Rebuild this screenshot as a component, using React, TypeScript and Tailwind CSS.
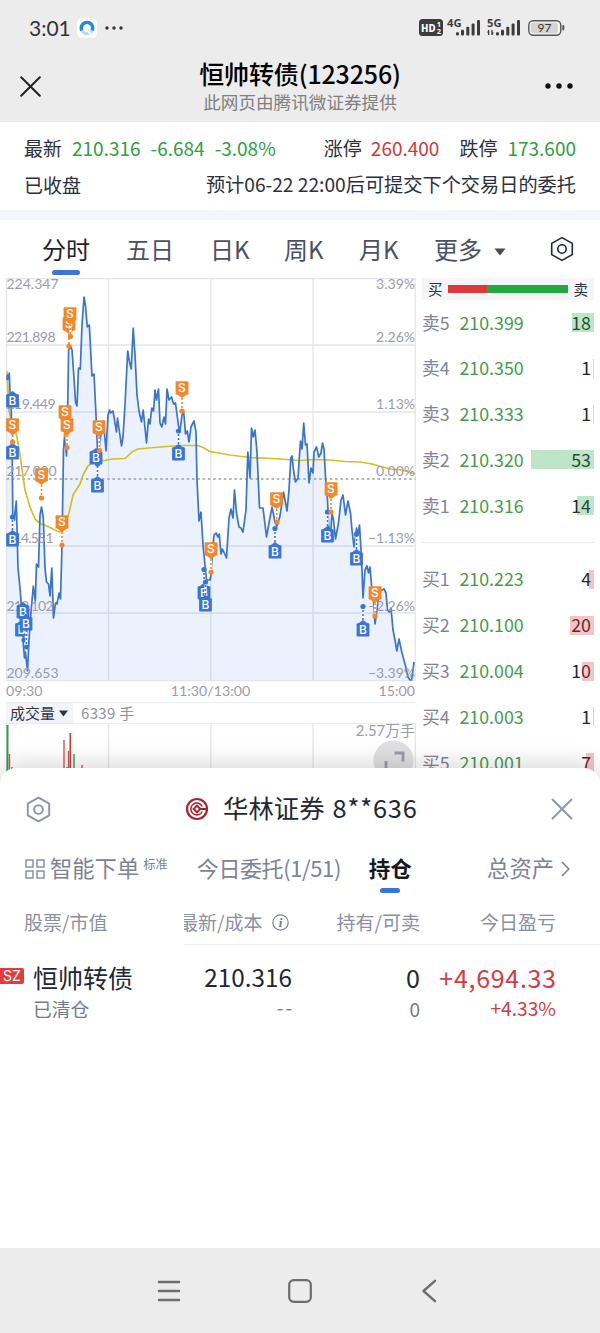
import React from "react";

const BLUE = "#3a74d8";
const ORANGE = "#f5872b";

const pricePoints =
  "7,380 7.5,375 8.5,379 9.3,373 10,392 11,400 12,440 12.8,515 14.5,520 15,512 16.3,501 18,568 20,588 21,600 23,640 24.5,658 25.5,652 27.5,671 29,640 31,612 33.3,586 35.3,601 36.5,564 38.5,567 40,515 41.5,507 43.3,518 45,568 46.5,582 48.5,584 50,596 51.8,568 53.5,618 55.5,603 57,604 59,593 60.5,599 62,545 63.5,450 64.5,437 66.5,456 67.5,420 68.6,350 70.5,346 72,350 74,378 75.5,402 77,406 78.5,368 80.3,369 82,325 84,297 85.5,306 87.3,327 89.3,325 92,376 94,374 96,415 97.5,450 99.5,451 101,432 104,428 106,451 108,415 109.5,410 110.5,413 113,411 116.5,432 117.5,418 121.5,446 123,437 125,405 127.7,351 129.5,362 131.2,369 133.2,328 135,355 137,395 139,411 141.5,422 143.2,410 146.5,443 148.5,419 150,424 151.8,408 153.5,411 155,390 156.5,400 158.5,389 160,423 161.8,427 164,417 165.5,424 167,389 169,400 171.5,397 173.5,404 175.5,403 178.5,426 180,431 182,415 183.7,412 185.5,434 187.3,431 189,442 191,427 194,421 196,432 197,480 199,521 201,512 203,545 206.5,580 210,580 211,575 213,545 214,535 216,533 218,537 219.3,534 221,554 222.5,549 226.5,558 229,518 231,509 233,518 234.5,490 236.5,513 239,527 241,528 243,532 246,510 247.8,452 250,478 251.5,428 253.3,437 255,430 257,452 259.5,508 263,508 266.5,537 269,523 272,507 275,522 277,526 280,516 283.5,492 285,500 287,511 289,490 290.8,458 292,456 293.5,470 295.5,482 298,478 299.5,455 300.5,441 302,449 303.7,423 305.5,445 307,444 309,483 311,468 313,473 314,452 316.5,447 318.8,457 321,453 322.5,443 324,449 325.5,477 327.5,500 329,530 330.5,535 332,513 333.5,520 335.5,539 338.5,523 341,500 343,495 345.5,515 348,501 350.5,513 352,530 354,547 355.5,536 356.5,528 358,535 359.5,525 361,550 362,570 363,598 365,570 367,566 368.5,573 370,567 371.5,585 373.5,600 375,624 377,610 379,592 382,590 384,589 386,593 387.5,610 389.2,612 391,608 393,630 395,640 396.8,651 399,639 402,653 405,664 408,677 410,680 411.5,680 413,670 414,662";

const averagePoints =
  "7,371 9,410 12,424 15,430 17,437 20,455 25,490 30,507 35,519 41,524 47,526 55,530 60,532 65,524 69,513 73,495 78,487 80,484 83,475 88,466 92,463 97,461 105,460.5 112,459 125,458.5 132,452 138,449 160,447 180,445.5 198,445.5 204,448 210,451.5 230,455 250,457.5 280,459 300,460.5 315,459.5 330,460 345,461.5 360,462 372,464 390,469 402,470 415,474";

type Marker = { kind: "B" | "S"; x: number; y: number; dotX?: number; dotY?: number };

// y is the centre of the label box, dotX / dotY the trade itself
const markers: Marker[] = [
  { kind: "B", x: 12.5, y: 401 },
  { kind: "B", x: 12.5, y: 453, dotX: 12.5, dotY: 429 },
  { kind: "S", x: 12.5, y: 425, dotX: 12.5, dotY: 442 },
  { kind: "B", x: 12.5, y: 540, dotX: 12.5, dotY: 517 },
  { kind: "B", x: 21.5, y: 630, dotX: 24, dotY: 640 },
  { kind: "B", x: 23, y: 612 },
  { kind: "B", x: 26, y: 624, dotX: 26.5, dotY: 647 },
  { kind: "S", x: 41.5, y: 475, dotX: 41.5, dotY: 498 },
  { kind: "S", x: 62, y: 522, dotX: 62, dotY: 545 },
  { kind: "S", x: 65, y: 412, dotX: 66, dotY: 435 },
  { kind: "S", x: 67, y: 425, dotX: 67, dotY: 447.5 },
  { kind: "S", x: 69, y: 324, dotX: 69, dotY: 346 },
  { kind: "S", x: 70, y: 314, dotX: 70.5, dotY: 336.5 },
  { kind: "B", x: 97.5, y: 486, dotX: 97.5, dotY: 464 },
  { kind: "B", x: 96, y: 458 },
  { kind: "S", x: 99, y: 427, dotX: 99.5, dotY: 450.5 },
  { kind: "B", x: 178.5, y: 454, dotX: 178.5, dotY: 431 },
  { kind: "S", x: 182, y: 388, dotX: 182, dotY: 411 },
  { kind: "B", x: 204, y: 593, dotX: 204, dotY: 569.5 },
  { kind: "B", x: 205.5, y: 605, dotX: 205.5, dotY: 582 },
  { kind: "S", x: 211, y: 549, dotX: 211, dotY: 572 },
  { kind: "B", x: 275, y: 552, dotX: 275, dotY: 528.5 },
  { kind: "S", x: 276.5, y: 499, dotX: 277, dotY: 522 },
  { kind: "B", x: 327.5, y: 536, dotX: 327.5, dotY: 512 },
  { kind: "S", x: 331, y: 489, dotX: 331, dotY: 512 },
  { kind: "B", x: 356.5, y: 559, dotX: 356.5, dotY: 534 },
  { kind: "B", x: 363, y: 630, dotX: 363, dotY: 606.5 },
  { kind: "S", x: 375, y: 593, dotX: 375, dotY: 616 },
];

const priceLabels = [
  { y: 288.5, left: "224.347", right: "3.39%", width: 52 },
  { y: 342, left: "221.898", right: "2.26%", width: 49 },
  { y: 409, left: "219.449", right: "1.13%", width: 49 },
  { y: 476, left: "217.000", right: "0.00%", width: 50 },
  { y: 543, left: "214.551", right: "−1.13%", width: 47 },
  { y: 610.5, left: "212.102", right: "−2.26%", width: 47 },
  { y: 677.5, left: "209.653", right: "−3.39%", width: 52 },
];

const volumeBars = [
  { x: 7.5, top: 1, w: 2, color: "#2f9e44" },
  { x: 9.5, top: 30, w: 1.4, color: "#d9534f" },
  { x: 12, top: 43, w: 1.4, color: "#2f9e44" },
  { x: 64, top: 16, w: 1.4, color: "#d9534f" },
  { x: 67, top: 43, w: 1.4, color: "#2f9e44" },
  { x: 68.5, top: 27, w: 1.4, color: "#d9534f" },
  { x: 70.3, top: 9, w: 1.6, color: "#c93a3a" },
  { x: 74, top: 30, w: 1.4, color: "#2f9e44" },
  { x: 82, top: 41, w: 1.4, color: "#d9534f" },
];

const sells = [
  { name: "卖5", price: "210.399", qty: 18, bar: 22 },
  { name: "卖4", price: "210.350", qty: 1, bar: 1 },
  { name: "卖3", price: "210.333", qty: 1, bar: 1 },
  { name: "卖2", price: "210.320", qty: 53, bar: 63 },
  { name: "卖1", price: "210.316", qty: 14, bar: 17 },
];

const buys = [
  { name: "买1", price: "210.223", qty: 4, bar: 5 },
  { name: "买2", price: "210.100", qty: 20, bar: 24 },
  { name: "买3", price: "210.004", qty: 10, bar: 12 },
  { name: "买4", price: "210.003", qty: 1, bar: 1 },
  { name: "买5", price: "210.001", qty: 7, bar: 8 },
];

const HexIcon: React.FC<{ color: string; size: number; stroke: number }> = ({ color, size, stroke }) => (
  <svg width={size} height={size} viewBox="0 0 26 26" fill="none" stroke={color} strokeWidth={stroke} strokeLinejoin="round">
    <path d="M13 1.6 L23.3 7.4 V18.6 L13 24.4 L2.7 18.6 V7.4 Z" />
    <circle cx="13" cy="13" r="4.2" />
  </svg>
);

const Signal: React.FC<{ label: string; data?: boolean }> = ({ label, data }) => (
  <svg width="36" height="20" viewBox="0 0 36 20" fill="#3c3c3c">
    <text x="0" y="9" fontSize="11" fontWeight="700" fontFamily="'Noto Sans', sans-serif" textLength="14.5" lengthAdjust="spacingAndGlyphs">{label}</text>
    {data && (
      <g>
        <path d="M1.6 12 V17 M5 12 V17" stroke="#3c3c3c" strokeWidth="1.3" />
        <path d="M0 14.5 L1.6 12 V14.5 Z M5 17 L7 14.6 H5 Z" />
      </g>
    )}
    <rect x="9" y="14.3" width="3" height="3.2" rx="1" />
    <rect x="14" y="11.8" width="3" height="5.7" rx="1" />
    <rect x="19.3" y="8.8" width="3" height="8.7" rx="1" />
    <rect x="24.6" y="5.5" width="3" height="12" rx="1" />
    <rect x="30" y="2" width="3" height="15.5" rx="1" />
  </svg>
);

const StatusBar: React.FC = () => (
  <div className="flex h-[54px] items-center pl-[29px] pr-[35px] pt-px">
    <span className="w-[46px] font-[Lato] text-[21px] leading-none text-[#333]">3:01</span>
    <svg className="ml-[2px]" width="20" height="20" viewBox="0 0 20 20">
      <rect width="20" height="20" rx="5" fill="#fdfdfd" />
      <circle cx="10" cy="10" r="5.7" fill="none" stroke="#a9dcf7" strokeWidth="3" />
      <path d="M4.8 12.5 A5.7 5.7 0 1 1 15.2 12.3" fill="none" stroke="#2489dc" strokeWidth="3.4" />
      <path d="M10.5 11 L17 16.8 L11 16 Z" fill="#e4f3fc" />
    </svg>
    <svg className="ml-[8px]" width="18" height="6" viewBox="0 0 18 6" fill="#333">
      <circle cx="2" cy="3" r="1.7" />
      <circle cx="9" cy="3" r="1.7" />
      <circle cx="16" cy="3" r="1.7" />
    </svg>
    <div className="ml-auto flex items-center">
      <svg width="24" height="17" viewBox="0 0 24 17">
        <rect width="24" height="17" rx="3.5" fill="#3c3c3c" />
        <text x="2" y="12.5" fontSize="11" fontWeight="800" fontFamily="'Noto Sans', sans-serif" fill="#fff" textLength="14.5" lengthAdjust="spacingAndGlyphs">HD</text>
        <text x="17.8" y="8" fontSize="7.5" fontWeight="700" fontFamily="'Noto Sans', sans-serif" fill="#fff">1</text>
        <text x="17.8" y="15.4" fontSize="7.5" fontWeight="700" fontFamily="'Noto Sans', sans-serif" fill="#fff">2</text>
      </svg>
      <div className="ml-[4px]"><Signal label="4G" /></div>
      <div className="ml-[4px]"><Signal label="5G" data /></div>
      <svg className="ml-[5px]" width="37" height="16" viewBox="0 0 37 16">
        <rect x="0.8" y="0.8" width="32" height="14.4" rx="4.5" fill="#f4f4f4" stroke="#555" strokeWidth="1.4" />
        <rect x="2.8" y="2.8" width="27" height="10.4" rx="2.5" fill="#d4d4d4" />
        <rect x="34.3" y="5" width="2" height="5.5" rx="1" fill="#555" />
        <text x="16.5" y="12.3" textAnchor="middle" fontSize="12" fontFamily="Lato, sans-serif" fill="#333">97</text>
      </svg>
    </div>
  </div>
);

const TitleBar: React.FC = () => (
  <div className="flex h-[68px] items-center justify-between pl-[20px] pr-[27px]">
    <svg className="-mt-[4px]" width="21" height="21" viewBox="0 0 21 21" stroke="#222" strokeWidth="2" strokeLinecap="round">
      <path d="M1.2 1.2 L19.8 19.8 M19.8 1.2 L1.2 19.8" />
    </svg>
    <div className="ml-[14px] flex flex-col items-center">
      <h1 className="-mt-[7px] text-[25px] font-medium leading-[36px] tracking-[-0.15px] text-black">恒帅转债(123256)</h1>
      <p className="-mt-[2px] text-[17.6px] leading-[26px] text-[#808080]">此网页由腾讯微证券提供</p>
    </div>
    <svg className="-mt-[4px]" width="28" height="6" viewBox="0 0 28 6" fill="#111">
      <circle cx="3" cy="3" r="2.7" />
      <circle cx="14" cy="3" r="2.7" />
      <circle cx="25" cy="3" r="2.7" />
    </svg>
  </div>
);

const Quote: React.FC = () => (
  <div className="h-[98px] border-b-[10px] border-[#f4f5f9] bg-white px-[24px] text-[19px] leading-[37px] text-[#2b303c]">
    <div className="flex whitespace-pre pt-[7px]">
      <span>最新</span>
      <span className="ml-[10px] text-[#2f9e44]">210.316</span>
      <span className="ml-[10px] text-[#2f9e44]">-6.684</span>
      <span className="ml-[10px] text-[#2f9e44]">-3.08%</span>
      <span className="ml-auto">涨停</span>
      <span className="ml-[9px] text-[#d03a3a]">260.400</span>
      <span className="ml-[20px]">跌停</span>
      <span className="ml-[10px] text-[#2f9e44]">173.600</span>
    </div>
    <div className="flex justify-between">
      <span>已收盘</span>
      <span className="text-[19.2px]">预计06-22 22:00后可提交下个交易日的委托</span>
    </div>
  </div>
);

const ChartTabs: React.FC = () => (
  <div className="flex h-[58px] bg-white pl-[42px] pr-[25px] text-[24px] leading-[58px] text-[#4a5164]">
    <div className="flex w-[84px] flex-col">
      <span className="h-[50px] text-[#1d2230]">分时</span>
      <span className="ml-[10px] h-[5px] w-[28px] rounded-full bg-[#3a74d8]" />
    </div>
    <span className="w-[84px]">五日</span>
    <span className="w-[74px]">日K</span>
    <span className="w-[75px]">周K</span>
    <span className="w-[75px]">月K</span>
    <span>更多</span>
    <svg className="ml-[12px] mt-[28px]" width="12" height="8" viewBox="0 0 12 8" fill="#444a58">
      <path d="M0.5 0.5 H11.5 L6 7.5 Z" />
    </svg>
    <div className="ml-auto mt-[16px]">
      <HexIcon color="#222733" size={26} stroke={1.6} />
    </div>
  </div>
);

const MarkerTag: React.FC<{ m: Marker }> = ({ m }) => {
  const color = m.kind === "B" ? BLUE : ORANGE;
  const tip = m.kind === "B" ? m.y - 10 : m.y + 10;
  const edge = m.kind === "B" ? m.y - 6 : m.y + 6;
  return (
    <g>
      {m.dotY !== undefined && (
        <>
          <path d={`M${m.x} ${tip} L${m.dotX} ${m.dotY}`} stroke="#fff" strokeWidth="2.4" />
          <path d={`M${m.x} ${tip} L${m.dotX} ${m.dotY}`} stroke={color} strokeWidth="1.6" strokeDasharray="2 2" />
          <circle cx={m.dotX} cy={m.dotY} r="2.6" fill={color} />
        </>
      )}
      <path d={`M${m.x - 5.5} ${edge} L${m.x} ${tip} L${m.x + 5.5} ${edge} Z`} fill={color} />
      <rect x={m.x - 6.4} y={m.y - 6.8} width="12.8" height="13.4" rx="1" fill={color} />
      <text x={m.x} y={m.y + 4.3} textAnchor="middle" fontSize="12" fontWeight="500" fontFamily="Inter, sans-serif" fill="#fff">{m.kind}</text>
    </g>
  );
};

const PriceChart: React.FC = () => (
  <svg className="block" width="416" height="404" viewBox="0 278 416 404">
    <g stroke="#e3e5ea" strokeWidth="1.3">
      <path d="M6.5 278.6 H415.5 M6.5 345 H415.5 M6.5 412 H415.5 M6.5 546 H415.5 M6.5 613 H415.5 M6.5 680.6 H415.5" />
      <path d="M6.5 278 V681 M108.5 278 V681 M210.8 278 V681 M313 278 V681 M415.3 278 V681" />
    </g>
    <polygon points={`7,680 ${pricePoints} 414,680`} fill="#3a74e8" fillOpacity="0.1" />
    <path d="M6.5 479 H415.5" stroke="#9a9ca6" strokeWidth="1.3" strokeDasharray="2.5 2.8" />
    <polyline points={averagePoints} fill="none" stroke="#cfc224" strokeWidth="1.7" strokeLinejoin="round" />
    <polyline points={pricePoints} fill="none" stroke="#3a74cc" strokeWidth="1.7" strokeLinejoin="round" />
    <g fontSize="14" fill="#9a9ca8" fontFamily="Lato, sans-serif">
      {priceLabels.map((l) => (
        <g key={l.left}>
          <text x="6.5" y={l.y} textLength={l.width}>{l.left}</text>
          <text x="415" y={l.y} textAnchor="end">{l.right}</text>
        </g>
      ))}
    </g>
    {markers.map((m, i) => (
      <MarkerTag key={i} m={m} />
    ))}
  </svg>
);

const Volume: React.FC = () => (
  <>
    <div className="ml-[6px] flex h-[22px] items-center border-y border-[#e9ebef] leading-none">
      <span className="flex h-full w-[67px] items-center bg-[#f3f4f9] pb-[2px] pl-[4px] text-[15px] text-[#2f3442]">
        成交量
        <svg className="ml-[4px] mt-[2px]" width="9" height="7" viewBox="0 0 9 7" fill="#2f3442">
          <path d="M0 0.5 H9 L4.5 6.5 Z" />
        </svg>
      </span>
      <span className="ml-[8px] pb-[2px] text-[15px] tracking-[0.3px] text-[#8f929e]">6339 手</span>
    </div>
    <svg className="block" width="416" height="60" viewBox="0 0 416 60">
      <path d="M6.5 0 V60 M108.5 0 V60 M210.8 0 V60 M313 0 V60 M415.3 0 V60" stroke="#e3e5ea" strokeWidth="1.3" />
      {volumeBars.map((b) => (
        <rect key={b.x} x={b.x - b.w / 2} y={b.top} width={b.w} height={60 - b.top} fill={b.color} />
      ))}
      <text x="415" y="12" textAnchor="end" fontSize="14.9" fill="#9a9ca8" fontFamily="Lato, 'Noto Sans CJK SC', sans-serif">2.57万手</text>
      <circle cx="393.5" cy="36.5" r="20" fill="#e0e0e2" />
      <path d="M394.5 29 H403 V37.5 M386 37 V46 H394" fill="none" stroke="#999ca8" strokeWidth="2.8" />
    </svg>
  </>
);

type Level = { name: string; price: string; qty: number; bar: number };

const LevelRow: React.FC<{ level: Level; side: "buy" | "sell" }> = ({ level, side }) => (
  <div className="relative flex h-[45.8px] items-center pb-px text-[17.8px] leading-none">
    <span className="w-[37.5px] text-[#7f8597]">{level.name}</span>
    <span className="text-[#449c4c]">{level.price}</span>
    <span className="ml-auto pr-[3px] text-[#22262f]">{level.qty}</span>
    <span
      className={`absolute right-0 top-[13px] h-[19px] ${side === "sell" ? "bg-[#27a844]/30" : "bg-[#e03c3c]/30"}`}
      style={{ width: level.bar }}
    />
  </div>
);

const OrderBook: React.FC = () => (
  <div className="ml-[6px] w-[172px]">
    <div className="flex h-[22px] items-center justify-between bg-[#f4f5f9] px-[6px] text-[14.5px] leading-none text-[#2b303c]">
      <span>买</span>
      <span className="flex h-[8px] w-[120px]">
        <span className="w-[39px] bg-[#e0383a]" />
        <span className="flex-1 bg-[#22a83f]" />
      </span>
      <span>卖</span>
    </div>
    {sells.map((l) => (
      <LevelRow key={l.name} level={l} side="sell" />
    ))}
    <div className="mb-[14px] mt-[13px] h-px bg-[#e9ebef]" />
    {buys.map((l) => (
      <LevelRow key={l.name} level={l} side="buy" />
    ))}
  </div>
);

const SheetHeader: React.FC = () => (
  <div className="flex h-[82px] items-center pl-[25px] pr-[27px]">
    <HexIcon color="#9095a5" size={27} stroke={1.9} />
    <svg className="ml-[133px]" width="24" height="24" viewBox="0 0 24 24" fill="none" stroke="#a3252b">
      <circle cx="12" cy="12" r="10" strokeWidth="2.2" />
      <path d="M17.3 9.5 A6 6 0 1 0 17.3 14.5" strokeWidth="1.5" />
      <path d="M12 8.6 L15.4 12 L12 15.4 L8.6 12 Z M15.4 12 H22" strokeWidth="2" />
    </svg>
    <span className="ml-[14px] flex pb-[2px] text-[25.4px] leading-none text-[#222733]">
      华林证券
      <span className="ml-[8px] tracking-[0.85px]">8**636</span>
    </span>
    <svg className="ml-auto" width="22" height="22" viewBox="0 0 22 22" stroke="#8f95a8" strokeWidth="2" strokeLinecap="round">
      <path d="M1.5 1.5 L20.5 20.5 M20.5 1.5 L1.5 20.5" />
    </svg>
  </div>
);

const SheetTabs: React.FC = () => (
  <div className="flex h-[54px] pl-[25px] pr-[30px] text-[22.3px] leading-[35px] text-[#7d8394]">
    <svg className="mt-[9px]" width="20" height="20" viewBox="0 0 20 20" fill="none" stroke="#8a90a2" strokeWidth="1.5">
      <rect x="1" y="1" width="7" height="7" />
      <rect x="12" y="1" width="7" height="7" />
      <rect x="1" y="12" width="7" height="7" />
      <rect x="12" y="12" width="7" height="7" />
    </svg>
    <span className="ml-[5px]">智能下单</span>
    <span className="ml-[4px] text-[12.3px] leading-[28px]">标准</span>
    <span className="ml-[29px] w-[144px] whitespace-nowrap text-[22px] tracking-[-0.4px]">今日委托(1/51)</span>
    <div className="ml-[28px] flex flex-col items-center">
      <span className="h-[38px] text-[21.5px] font-bold text-[#14171f]">持仓</span>
      <span className="h-[5px] w-[20px] rounded-full bg-[#3a74d8]" />
    </div>
    <span className="ml-auto">总资产</span>
    <svg className="ml-[7px] mt-[11px]" width="9" height="16" viewBox="0 0 9 16" fill="none" stroke="#7d8394" strokeWidth="1.6">
      <path d="M1 1 L7.8 8 L1 15" />
    </svg>
  </div>
);

const Holdings: React.FC = () => (
  <div>
    <div className="flex h-[41px] text-[19px] leading-[36px] text-[#8a90a0]">
      <span className="w-[184px] pl-[24px]">股票/市值</span>
      <div className="flex flex-1 border-b border-[#eceef2]">
        <div className="flex w-[106px] overflow-hidden">
          <span className="-ml-[5px] whitespace-nowrap">最新/成本</span>
          <svg className="ml-[10px] mt-[10px] shrink-0" width="17" height="17" viewBox="0 0 17 17">
            <circle cx="8.5" cy="8.5" r="7.7" fill="none" stroke="#7d8394" strokeWidth="1.2" />
            <text x="8.5" y="13" textAnchor="middle" fontSize="13" fontStyle="italic" fontWeight="700" fontFamily="Liberation Serif, serif" fill="#6f7588">i</text>
          </svg>
        </div>
        <span className="w-[130px] text-right">持有/可卖</span>
        <span className="w-[136px] text-right">今日盈亏</span>
      </div>
    </div>
    <div className="flex items-start pt-[13px]">
      <span className="mt-[10px] flex h-[16px] w-[24px] items-center justify-center rounded-r-[2px] bg-[#e03c3c] font-[Inter] text-[14px] leading-none text-white">SZ</span>
      <div className="ml-[9px] w-[130px]">
        <p className="text-[25px] leading-[38px] text-[#222733]">恒帅转债</p>
        <p className="text-[18.8px] leading-[25px] text-[#747a8a]">已清仓</p>
      </div>
      <div className="w-[129px] text-right">
        <p className="text-[24.3px] leading-[38px] text-[#222733]">210.316</p>
        <p className="-mt-[2px] text-[19px] leading-[25px] tracking-[2px] -mr-[2px] text-[#747a8a]">--</p>
      </div>
      <div className="w-[128px] text-right">
        <p className="text-[25px] leading-[38px] text-[#222733]">0</p>
        <p className="text-[19px] leading-[25px] text-[#747a8a]">0</p>
      </div>
      <div className="w-[136px] text-right text-[#d23c42]">
        <p className="-mr-[0.7px] text-[25px] leading-[38px] tracking-[0.7px]">+4,694.33</p>
        <p className="text-[19.2px] leading-[25px]">+4.33%</p>
      </div>
    </div>
  </div>
);

const NavBar: React.FC = () => (
  <div className="relative flex h-[85px] items-center bg-[#ececec] pl-[157px]">
    <svg width="24" height="22" viewBox="0 0 24 22" stroke="#6d6d6d" strokeWidth="2.5" strokeLinecap="round">
      <path d="M2 2 H22 M2 11 H22 M2 20 H22" />
    </svg>
    <svg className="ml-[107px]" width="24" height="24" viewBox="0 0 24 24" fill="none" stroke="#6d6d6d" strokeWidth="2.2">
      <rect x="1.2" y="1.2" width="21.6" height="21.6" rx="4.5" />
    </svg>
    <svg className="ml-[109px]" width="16" height="24" viewBox="0 0 16 24" fill="none" stroke="#6d6d6d" strokeWidth="2.4" strokeLinecap="round" strokeLinejoin="round">
      <path d="M14 1.8 L2.5 12 L14 22.2" />
    </svg>
  </div>
);

const App: React.FC = () => {
  return (
    <div className="flex h-[1333px] w-[600px] flex-col overflow-hidden bg-white font-['Noto_Sans_CJK_SC',sans-serif]">
      <header className="h-[122px] shrink-0 bg-[#ececec]">
        <StatusBar />
        <TitleBar />
      </header>
      <Quote />
      <ChartTabs />
      <main className="flex h-[506px] shrink-0 overflow-hidden bg-white">
        <div className="w-[416px]">
          <PriceChart />
          <div className="flex h-[20px] justify-between pl-[6px] pr-[1px] font-[Lato] text-[14.2px] leading-[18px] text-[#9a9ca8]">
            <span>09:30</span>
            <span>11:30/13:00</span>
            <span>15:00</span>
          </div>
          <Volume />
        </div>
        <OrderBook />
      </main>
      <section className="relative -mt-[16px] h-[480px] shrink-0 rounded-t-[16px] bg-white shadow-[0_-4px_24px_rgba(0,0,0,0.16)]">
        <SheetHeader />
        <SheetTabs />
        <Holdings />
      </section>
      <NavBar />
    </div>
  );
};

export default App;
